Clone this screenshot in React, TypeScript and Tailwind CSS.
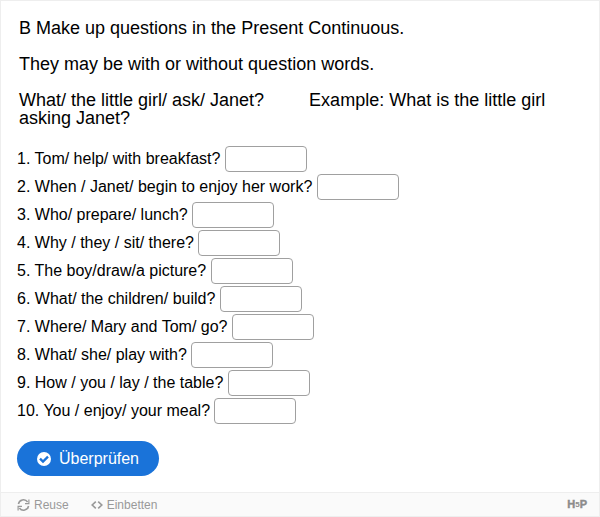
import React from 'react'

const questions = [
  '1. Tom/ help/ with breakfast?',
  '2. When / Janet/ begin to enjoy her work?',
  '3. Who/ prepare/ lunch?',
  '4. Why / they / sit/ there?',
  '5. The boy/draw/a picture?',
  '6. What/ the children/ build?',
  '7. Where/ Mary and Tom/ go?',
  '8. What/ she/ play with?',
  '9. How / you / lay / the table?',
  '10. You / enjoy/ your meal?',
]

const CheckIcon = () => (
  <svg className="w-3.5 h-3.5" viewBox="0 0 14 14">
    <circle cx="7" cy="7" r="7" fill="#fff" />
    <path d="M3 6.6l3 3 5-5" fill="none" stroke="#1a73d9" strokeWidth="2.3" />
  </svg>
)

const ReuseIcon = () => (
  <svg className="w-[13px] h-3" viewBox="0 0 13 12" fill="none" stroke="#999" strokeWidth="1.5">
    <path d="M1.4 5A5.1 5.1 0 0 1 10.6 3M11.6 7A5.1 5.1 0 0 1 2.4 9" />
    <path d="M11.9.6v4H8M1.1 11.4v-4H5" strokeWidth="1.2" />
  </svg>
)

const EmbedIcon = () => (
  <svg className="w-3 h-3" viewBox="0 0 12 12" fill="none" stroke="#999" strokeWidth="1.6">
    <path d="M4.8 2.6L1.2 6l3.6 3.4M7.2 2.6L10.8 6 7.2 9.4" />
  </svg>
)

const Logo = () => (
  <div className="flex items-center h-3 text-[#8c8c8c] font-bold leading-none">
    <span className="text-[11px] [-webkit-text-stroke:0.4px_#8c8c8c]">H</span>
    <span className="text-[8px]">5</span>
    <span className="text-[11px] [-webkit-text-stroke:0.4px_#8c8c8c]">P</span>
  </div>
)

const App = () => {
  return (
    <div className="flex flex-col h-[517px] border border-[#eee] bg-white font-['Liberation_Sans',Arial,sans-serif] text-black">
      <div className="flex-1 px-4">
        <div className="pt-[18px] px-0.5 text-[18px] leading-[18px]">
          <p className="mb-[18px]">B Make up questions in the Present Continuous.</p>
          <p className="mb-[18px]">They may be with or without question words.</p>
          <p className="whitespace-pre-wrap">
            {'What/ the little girl/ ask/ Janet?         Example: What is the little girl asking Janet?'}
          </p>
        </div>
        <div className="mt-[18px]">
          {questions.map((question) => (
            <div key={question} className="flex items-center h-7 text-base">
              <span>{question}</span>
              <input
                type="text"
                className="w-[82px] h-[26px] ml-[4.45px] px-2 border border-[#a0a0a0] rounded bg-white"
              />
            </div>
          ))}
        </div>
        <button
          type="button"
          className="flex items-center justify-center gap-2 w-[142px] h-[35px] mt-4 rounded-full bg-[#1a73d9] text-white text-base"
        >
          <CheckIcon />
          Überprüfen
        </button>
      </div>
      <div className="flex items-center h-6 pl-4 pr-3 border-t border-[#eee] bg-[#fafafa] text-xs text-[#999]">
        <div className="flex items-center gap-1">
          <ReuseIcon />
          Reuse
        </div>
        <div className="flex items-center gap-1 ml-[22px] mr-auto">
          <EmbedIcon />
          Einbetten
        </div>
        <Logo />
      </div>
    </div>
  )
}

export default App
